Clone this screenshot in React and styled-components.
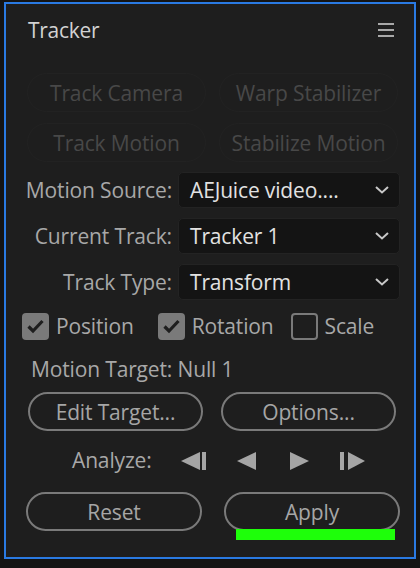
import React from "react";
import styled, { createGlobalStyle } from "styled-components";

const Global = createGlobalStyle`
  html, body { margin: 0; padding: 0; background: #141414; }
  body { font-family: "Open Sans", "Noto Sans", sans-serif; -webkit-font-smoothing: antialiased; }
  * { box-sizing: border-box; }
`;

const Panel = styled.div`
  margin: 2px 4px 0;
  width: 412px;
  height: 557px;
  border: 2px solid #2a7ae2;
  background: #1e1e1e;
  display: flex;
  flex-direction: column;
`;

const Header = styled.div`
  height: 52px;
  display: flex;
  align-items: center;
  justify-content: space-between;
  padding: 0 20px 0 22px;
`;

const Title = styled.div`
  color: #d2d2d2;
  font-size: 21px;
  letter-spacing: -0.3px;
`;

const Menu = styled.div`
  width: 16px;
  display: flex;
  flex-direction: column;
  gap: 4px;
  span { display: block; height: 2px; background: #a8a8a8; }
`;

const PillGrid = styled.div`
  display: grid;
  grid-template-columns: 1fr 1fr;
  column-gap: ${(p) => p.$gap || 22}px;
  row-gap: 11px;
  padding: 0 ${(p) => p.$right || 14}px 0 ${(p) => p.$left || 20}px;
  margin-top: ${(p) => p.$mt || 0}px;
`;

const Pill = styled.div`
  position: relative;
  height: 39px;
  border-radius: 20px;
  border: ${(p) => (p.$disabled ? "1px solid #222222" : "2px solid #7a7a7a")};
  background: transparent;
  color: ${(p) => (p.$disabled ? "#484848" : "#a6a6a6")};
  font-size: 21px;
  letter-spacing: -0.15px;
  display: flex;
  align-items: center;
  justify-content: center;
`;

const SelectList = styled.div`
  display: flex;
  flex-direction: column;
  gap: 10px;
  margin-top: 10px;
  padding-right: 14px;
`;

const SelectRow = styled.div`
  display: grid;
  grid-template-columns: 1fr 222px;
  column-gap: 6px;
  align-items: center;
`;

const Label = styled.div`
  text-align: right;
  color: #a8a8a8;
  font-size: 21px;
  letter-spacing: -0.15px;
`;

const Select = styled.div`
  height: 36px;
  border-radius: 5px;
  background: #141414;
  border: 1px solid #232323;
  display: flex;
  align-items: center;
  justify-content: space-between;
  padding: 0 10px 0 11px;
  color: #e2e2e2;
  font-size: 21px;
  letter-spacing: -0.15px;
`;

const CheckRow = styled.div`
  display: flex;
  align-items: center;
  margin-top: 12px;
  padding-left: 16px;
  height: 28px;
`;

const CheckItem = styled.div`
  display: flex;
  align-items: center;
  gap: 7px;
  margin-right: ${(p) => p.$mr || 0}px;
  color: #a8a8a8;
  font-size: 21px;
  letter-spacing: -0.15px;
`;

const Box = styled.div`
  width: 27px;
  height: 27px;
  border-radius: 4px;
  background: ${(p) => (p.$on ? "#7a7a7a" : "transparent")};
  border: ${(p) => (p.$on ? "none" : "2.5px solid #7a7a7a")};
  display: flex;
  align-items: center;
  justify-content: center;
`;

const TargetText = styled.div`
  margin-top: 17px;
  padding-left: 25px;
  height: 24px;
  line-height: 24px;
  color: #a8a8a8;
  font-size: 21px;
  letter-spacing: -0.15px;
`;

const AnalyzeRow = styled.div`
  margin-top: 14px;
  height: 30px;
  display: flex;
  align-items: center;
  padding-left: 66px;
  color: #a8a8a8;
  font-size: 21px;
  letter-spacing: -0.15px;
`;

const Icons = styled.div`
  display: flex;
  align-items: center;
  gap: 28px;
  margin-left: 29px;
  margin-top: 2px;
`;

const GreenBar = styled.div`
  position: absolute;
  left: 10px;
  top: 35px;
  width: 159px;
  height: 11px;
  background: #1eff0a;
`;

const Chevron = () => (
  <svg width="14" height="8" viewBox="0 0 14 8">
    <path d="M1 1 L7 6.5 L13 1" fill="none" stroke="#c8c8c8" strokeWidth="2" />
  </svg>
);

const Check = () => (
  <svg width="19" height="16" viewBox="0 0 19 16">
    <path d="M2.5 8.5 L7 13 L16.5 3" fill="none" stroke="#1e1e1e" strokeWidth="3.2" />
  </svg>
);

const IC = "#a5a5a5";
const StepBack = () => (
  <svg width="25" height="18" viewBox="0 0 25 18">
    <polygon points="0,9 19,0 19,18" fill={IC} />
    <rect x="21" y="0" width="4" height="18" fill={IC} />
  </svg>
);
const Back = () => (
  <svg width="25" height="18" viewBox="0 0 25 18">
    <polygon points="3,9 22,0 22,18" fill={IC} />
  </svg>
);
const Play = () => (
  <svg width="25" height="18" viewBox="0 0 25 18">
    <polygon points="22,9 3,0 3,18" fill={IC} />
  </svg>
);
const StepFwd = () => (
  <svg width="25" height="18" viewBox="0 0 25 18">
    <rect x="0" y="0" width="4" height="18" fill={IC} />
    <polygon points="25,9 8,0 8,18" fill={IC} />
  </svg>
);

const selects = [
  ["Motion Source:", "AEJuice video...."],
  ["Current Track:", "Tracker 1"],
  ["Track Type:", "Transform"],
];

export default function App() {
  return (
    <>
      <Global />
      <Panel>
        <Header>
          <Title>Tracker</Title>
          <Menu>
            <span />
            <span />
            <span />
          </Menu>
        </Header>

        <PillGrid $mt={17} $gap={13} $left={21} $right={16}>
          <Pill $disabled>Track Camera</Pill>
          <Pill $disabled>Warp Stabilizer</Pill>
          <Pill $disabled>Track Motion</Pill>
          <Pill $disabled>Stabilize Motion</Pill>
        </PillGrid>

        <SelectList>
          {selects.map(([l, v]) => (
            <SelectRow key={l}>
              <Label>{l}</Label>
              <Select>
                <span>{v}</span>
                <Chevron />
              </Select>
            </SelectRow>
          ))}
        </SelectList>

        <CheckRow>
          <CheckItem $mr={24}>
            <Box $on>
              <Check />
            </Box>
            Position
          </CheckItem>
          <CheckItem $mr={17}>
            <Box $on>
              <Check />
            </Box>
            Rotation
          </CheckItem>
          <CheckItem>
            <Box />
            Scale
          </CheckItem>
        </CheckRow>

        <TargetText>Motion Target: Null 1</TargetText>

        <PillGrid $mt={11} $gap={18} $left={22} $right={18}>
          <Pill>Edit Target...</Pill>
          <Pill>Options...</Pill>
        </PillGrid>

        <AnalyzeRow>
          Analyze:
          <Icons>
            <StepBack />
            <Back />
            <Play />
            <StepFwd />
          </Icons>
        </AnalyzeRow>

        <PillGrid $mt={17} $gap={22} $left={20} $right={14}>
          <Pill>Reset</Pill>
          <Pill>
            Apply
            <GreenBar />
          </Pill>
        </PillGrid>
      </Panel>
    </>
  );
}
